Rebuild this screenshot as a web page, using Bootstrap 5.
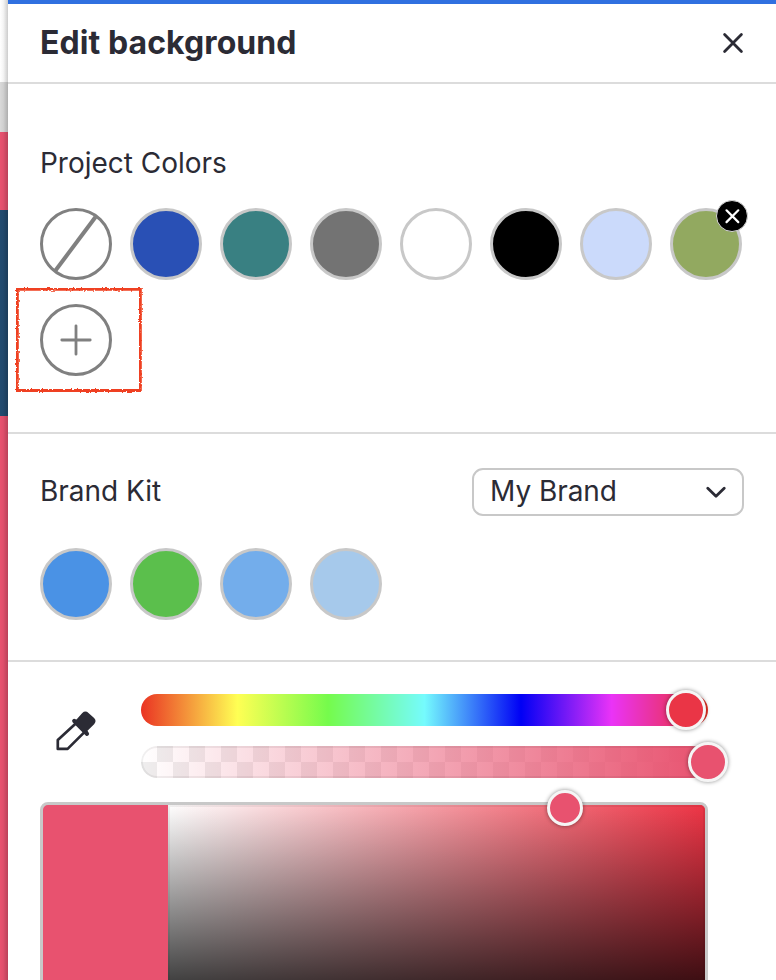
<!DOCTYPE html>
<html lang="en">
<head>
<meta charset="utf-8">
<meta name="viewport" content="width=device-width, initial-scale=1">
<title>Edit background</title>
<link href="https://cdn.jsdelivr.net/npm/bootstrap@5.3.0/dist/css/bootstrap.min.css" rel="stylesheet">
<style>
body{font-family:Inter,"Liberation Sans",sans-serif;color:#2b2b35;font-size:28px;line-height:40px;background:#fff}
.app-shell{height:980px}
.canvas-strip{width:8px;background:linear-gradient(90deg,rgba(0,0,0,0),rgba(0,0,0,.04) 40%,rgba(0,0,0,.2)),linear-gradient(#fff 82px,#d9d9d9 82px,#d9d9d9 132px,#e8526f 132px,#e8526f 210px,#234b70 210px,#234b70 416px,#e8526f 416px)}
.panel-head{height:84px;border-top:4px solid #3070e0;border-bottom:2px solid #dcdcdc;padding:0 32px}
.panel-title{font-size:32px;line-height:40px;font-weight:700;letter-spacing:.08px}
.icon-btn{background:none;border:0;padding:0;color:#2b2b35;line-height:0}
.panel-section{border-bottom:2px solid #dcdcdc;padding:0 32px}
.project-section{height:350px;padding-top:59px}
.brand-section{height:228px;padding-top:34px}
.section-label{font-size:28px;line-height:40px;letter-spacing:-.02px}
.brand-label{padding-top:3px}
.swatches{column-gap:18px;row-gap:24px}
.project-swatches{margin-top:25px}
.brand-swatches{margin-top:32px}
.swatch{width:72px;height:72px;border:3px solid #c8c8c8;border-radius:50%;padding:0;background:#fff}
.swatch-tool{border-color:#808080;color:#808080;line-height:0}
.c-blue{background:#2950b5}.c-teal{background:#398082}.c-gray{background:#737373}.c-black{background:#000}
.c-ice{background:#cbdafb}.c-olive{background:#92a960}
.b-blue{background:#4a92e5}.b-green{background:#5bbf4c}.b-sky{background:#73adeb}.b-pale{background:#a6c9eb}
.remove-badge{position:absolute;left:43px;top:-11px;width:32px;height:32px;border-radius:50%;background:#000;border:1px solid #d8d8d8;line-height:0}
.add-note{position:absolute;left:-28px;top:-20px;pointer-events:none}
.brand-select{width:272px;height:48px;border:2px solid #c8c8c8;border-radius:11px;padding:0 16px 0 16px;letter-spacing:-.05px}
.brand-select span{line-height:40px;padding-bottom:2px}
.picker{padding:32px 32px 0}
.dropper{width:101px;padding-left:12px;padding-bottom:10px}
.track{width:567px;height:32px;border-radius:16px}
.hue{background:linear-gradient(90deg,#ea3323,#ffff54 17%,#75fb4c 33%,#75fbfd 50%,#0000f5 67%,#ea33f7 83%,#ea3323)}
.alpha{margin-top:20px;box-shadow:inset 0 0 0 2px rgba(0,0,0,.06);background:linear-gradient(90deg,rgba(232,82,111,0),#e8526f),repeating-conic-gradient(#eee 0 25%,#fff 0 50%) 0 0/32px 32px}
.knob{position:absolute;border-radius:50%;border:3px solid #f5f5f5;box-shadow:0 0 4px rgba(0,0,0,.45);width:40px;height:40px;top:-4px;background:#e8526f}
.knob-hue{left:525px;background:#ea3546}
.knob-alpha{left:547px}
.color-box{width:668px;height:242px;margin-top:24px;border:3px solid #c8c8c8;border-radius:8px;background:#e8526f}
.shade{border-radius:0 5px 5px 0;box-shadow:inset 0 0 0 2px rgba(0,0,0,.06);background:linear-gradient(rgba(0,0,0,0),#000),linear-gradient(90deg,#fff,#ee3546)}
.preview{width:125px}
.knob-shade{width:36px;height:36px;left:504px;top:-15px}
</style>
<script src="https://cdn.jsdelivr.net/npm/bootstrap@5.3.0/dist/js/bootstrap.bundle.min.js"></script>
</head>
<body class="overflow-hidden">
<div class="app-shell d-flex overflow-hidden">
  <div class="canvas-strip flex-shrink-0"></div>
  <main class="flex-grow-1">
    <header class="panel-head d-flex align-items-center justify-content-between">
      <h1 class="panel-title mb-0">Edit background</h1>
      <button class="icon-btn" aria-label="Close"><svg width="22" height="22" viewBox="0 0 22 22" fill="none" stroke="currentColor" stroke-width="2.8" stroke-linecap="round"><path d="M2.6 2.6 19.4 19.4M19.4 2.6 2.6 19.4"/></svg></button>
    </header>
    <section class="panel-section project-section">
      <h2 class="section-label fw-normal mb-0">Project Colors</h2>
      <div class="swatches project-swatches d-flex flex-wrap">
        <button class="swatch swatch-tool" aria-label="No color"><svg width="66" height="66" viewBox="0 0 66 66" stroke="currentColor" stroke-width="4"><path d="M12.5 59.5 52.5 6"/></svg></button>
        <button class="swatch c-blue" aria-label="Blue"></button>
        <button class="swatch c-teal" aria-label="Teal"></button>
        <button class="swatch c-gray" aria-label="Gray"></button>
        <button class="swatch" aria-label="White"></button>
        <button class="swatch c-black" aria-label="Black"></button>
        <button class="swatch c-ice" aria-label="Ice blue"></button>
        <div class="swatch c-olive position-relative"><span class="remove-badge d-flex align-items-center justify-content-center"><svg width="16" height="16" viewBox="0 0 16 16" stroke="#fff" stroke-width="2.2" stroke-linecap="round"><path d="M2.5 2.3 14.3 14.1M14.3 2.3 2.5 14.1"/></svg></span></div>
        <div class="swatch swatch-tool position-relative"><svg width="66" height="66" viewBox="0 0 66 66" stroke="currentColor" stroke-width="2.8" stroke-linecap="round"><path d="M18.8 33H47.2M33 18.8V47.2"/></svg>
          <svg class="add-note" width="128" height="106" viewBox="0 0 128 106" fill="none"><defs><filter id="crayon" x="-5%" y="-5%" width="110%" height="110%"><feTurbulence type="fractalNoise" baseFrequency=".45" numOctaves="2" seed="4"/><feDisplacementMap in="SourceGraphic" scale="3" xChannelSelector="R" yChannelSelector="G"/></filter></defs><path d="M2.4 2.3H125.4V103.5H2.4Z" stroke="#ef4123" stroke-width="2.8" filter="url(#crayon)"/></svg>
        </div>
      </div>
    </section>
    <section class="panel-section brand-section">
      <div class="d-flex justify-content-between">
        <h2 class="section-label brand-label fw-normal mb-0">Brand Kit</h2>
        <div class="brand-select d-flex align-items-center justify-content-between" role="button"><span>My Brand</span><svg width="20" height="14" viewBox="0 0 20 14" fill="none" stroke="currentColor" stroke-width="2.8" stroke-linecap="round" stroke-linejoin="round"><path d="M1.8 3.2 10 11.2 18.2 3.2"/></svg></div>
      </div>
      <div class="swatches brand-swatches d-flex">
        <button class="swatch b-blue" aria-label="Brand blue"></button>
        <button class="swatch b-green" aria-label="Brand green"></button>
        <button class="swatch b-sky" aria-label="Brand sky"></button>
        <button class="swatch b-pale" aria-label="Brand pale blue"></button>
      </div>
    </section>
    <section class="picker">
      <div class="d-flex">
        <div class="dropper d-flex align-items-center flex-shrink-0">
          <button class="icon-btn" aria-label="Pick a color"><svg width="48" height="48" viewBox="0 0 48 48"><g transform="translate(-52 -706)"><path d="M76 722.2 57.8 739V747.9H67.6L84.2 731.4" fill="none" stroke="#2b2b35" stroke-width="2.7" stroke-linejoin="round"/><path d="M82.3 711.9Q85.4 709 88.5 711.9L94.1 717.1Q97 720.2 94.1 723.2L87.5 729.8 88.6 731.4A2.1 2.1 0 0 1 85.7 734.4L72.6 721.2A2.1 2.1 0 0 1 75.5 718.2L76.5 718.5Z" fill="#2b2b35"/></g></svg></button>
        </div>
        <div class="d-flex flex-column">
          <div class="track hue position-relative"><span class="knob knob-hue"></span></div>
          <div class="track alpha position-relative"><span class="knob knob-alpha"></span></div>
        </div>
      </div>
      <div class="color-box d-flex position-relative">
        <div class="preview"></div>
        <div class="shade flex-grow-1"></div>
        <span class="knob knob-shade"></span>
      </div>
    </section>
  </main>
</div>
</body>
</html>
